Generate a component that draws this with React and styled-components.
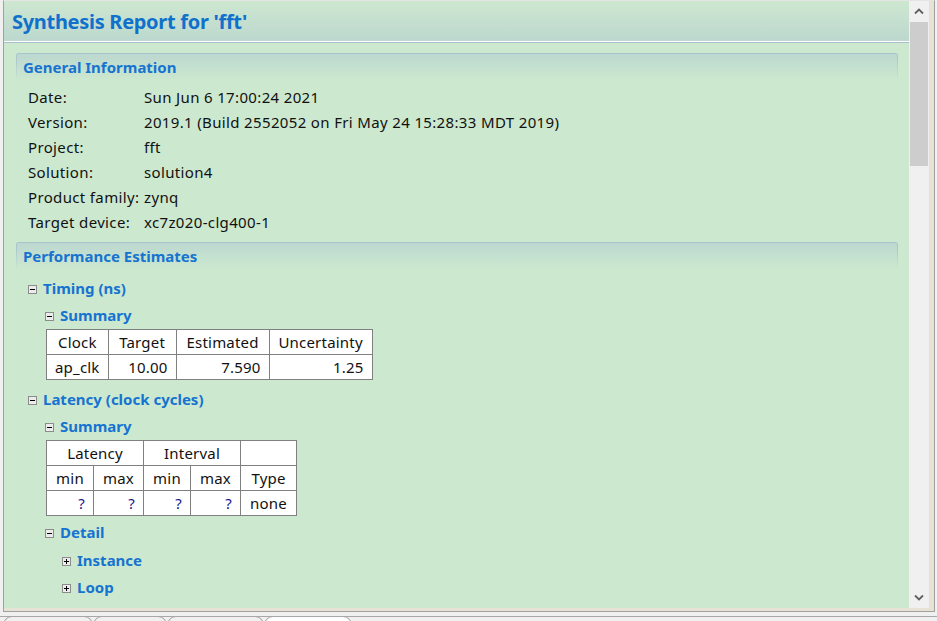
import React from 'react';
import styled, { createGlobalStyle } from 'styled-components';

const GlobalStyle = createGlobalStyle`
    html, body {
        margin: 0;
        padding: 0;
        background: #f0f0f0;
        overflow: hidden;
    }
    body {
        font-family: "Noto Sans", "Liberation Sans", sans-serif;
        width: 937px;
        height: 621px;
    }
`;

const generalInfo = [
    ['Date:', 'Sun Jun 6 17:00:24 2021'],
    ['Version:', '2019.1 (Build 2552052 on Fri May 24 15:28:33 MDT 2019)'],
    ['Project:', 'fft'],
    ['Solution:', 'solution4'],
    ['Product family:', 'zynq'],
    ['Target device:', 'xc7z020-clg400-1'],
];

const tabs = [
    { w: 88 },
    { w: 72 },
    { w: 95 },
    { w: 86, active: true },
];

// Little tree expander box (+ / -)
const Toggle = ({ open }) => (
    <ToggleBox>
        <svg width="7" height="7" viewBox="0 0 7 7">
            <rect x="1" y="3" width="5" height="1" fill="#000" />
            {!open && <rect x="3" y="1" width="1" height="5" fill="#000" />}
        </svg>
    </ToggleBox>
);

const Chevron = ({ down }) => (
    <svg width="10" height="7" viewBox="0 0 10 7">
        <path
            d={down ? 'M1 1.5 L5 5.5 L9 1.5' : 'M1 5.5 L5 1.5 L9 5.5'}
            fill="none"
            stroke="#606060"
            strokeWidth="1.8"
        />
    </svg>
);

const App = () => {
    return (
        <>
            <GlobalStyle />
            <Frame>
                <Inner>
                    <Content>
                        <TitleBar>
                            <Title>Synthesis Report for 'fft'</Title>
                        </TitleBar>
                        <Body>
                            <SectionHead>General Information</SectionHead>
                            <InfoGrid>
                                {generalInfo.map(([label, value]) => (
                                    <React.Fragment key={label}>
                                        <span>{label}</span>
                                        <span>{value}</span>
                                    </React.Fragment>
                                ))}
                            </InfoGrid>

                            <SectionHead>Performance Estimates</SectionHead>
                            <Head level={1}>
                                <Toggle open />Timing (ns)
                            </Head>
                            <Head level={2}>
                                <Toggle open />Summary
                            </Head>
                            <Grid>
                                <tbody>
                                    <tr>
                                        <Th w={61}>Clock</Th>
                                        <Th w={68}>Target</Th>
                                        <Th w={93}>Estimated</Th>
                                        <Th w={103}>Uncertainty</Th>
                                    </tr>
                                    <tr>
                                        <Td>ap_clk</Td>
                                        <Td align="right">10.00</Td>
                                        <Td align="right">7.590</Td>
                                        <Td align="right">1.25</Td>
                                    </tr>
                                </tbody>
                            </Grid>

                            <Head level={1}>
                                <Toggle open />Latency (clock cycles)
                            </Head>
                            <Head level={2}>
                                <Toggle open />Summary
                            </Head>
                            <Grid>
                                <tbody>
                                    <tr>
                                        <Th colSpan={2}>Latency</Th>
                                        <Th colSpan={2}>Interval</Th>
                                        <Th></Th>
                                    </tr>
                                    <tr>
                                        <Th w={47}>min</Th>
                                        <Th w={50}>max</Th>
                                        <Th w={47}>min</Th>
                                        <Th w={50}>max</Th>
                                        <Th w={56}>Type</Th>
                                    </tr>
                                    <tr>
                                        <Td align="right" unknown>?</Td>
                                        <Td align="right" unknown>?</Td>
                                        <Td align="right" unknown>?</Td>
                                        <Td align="right" unknown>?</Td>
                                        <Td align="center">none</Td>
                                    </tr>
                                </tbody>
                            </Grid>
                            <Head level={2}>
                                <Toggle open />Detail
                            </Head>
                            <Head level={3}>
                                <Toggle />Instance
                            </Head>
                            <Head level={3}>
                                <Toggle />Loop
                            </Head>
                        </Body>
                    </Content>
                    <Scrollbar>
                        <ScrollButton><Chevron /></ScrollButton>
                        <Track>
                            <Thumb />
                        </Track>
                        <ScrollButton><Chevron down /></ScrollButton>
                    </Scrollbar>
                </Inner>
            </Frame>
            <TabStrip>
                {tabs.map((t, i) => (
                    <Tab key={i} w={t.w} active={t.active} />
                ))}
            </TabStrip>
        </>
    );
};

const Frame = styled.div`
    margin-left: 3px;
    width: 928px;
    height: 609px;
    border-top: 1px solid #e4e4e4;
    border-left: 1px solid #a0a0a0;
    border-right: 1px solid #a0a0a0;
    border-bottom: 1px solid #a0a0a0;
    background: #e7e3d4;
    box-sizing: content-box;
    padding: 0 2px 1px 0;
`;

const Inner = styled.div`
    display: flex;
    height: 607px;
    width: 925px;
`;

const Content = styled.div`
    flex: 1;
    background: #cce8cf;
    overflow: hidden;
`;

const TitleBar = styled.div`
    height: 40px;
    display: flex;
    align-items: center;
    padding-left: 8px;
    background: linear-gradient(#cde7d0, #bcd8cf);
    border-bottom: 1px solid #ffffff;
    box-shadow: 0 1px 0 #a9bfcb;
`;

const Title = styled.h1`
    margin: 0;
    font-size: 20px;
    font-weight: 700;
    letter-spacing: -0.3px;
    color: #0f71cc;
`;

const Body = styled.div`
    padding: 11px 11px 0 12px;
`;

const SectionHead = styled.div`
    height: 26px;
    display: flex;
    align-items: center;
    padding-left: 7px;
    font-size: 15px;
    font-weight: 700;
    color: #1673d0;
    border-top: 1px solid #a9c2cd;
    border-radius: 3px 3px 0 0;
    background:
        linear-gradient(#a9c2cd, rgba(169, 194, 205, 0)) left / 1px 100% no-repeat,
        linear-gradient(#a9c2cd, rgba(169, 194, 205, 0)) right / 1px 100% no-repeat,
        linear-gradient(#bcd8d0, #cce8cf);
`;

const InfoGrid = styled.div`
    display: grid;
    grid-template-columns: 116px auto;
    grid-auto-rows: 25px;
    align-items: center;
    margin: 4px 0 8px;
    padding-left: 12px;
    font-size: 15px;
    letter-spacing: 0.35px;
    color: #111;
`;

const indent = { 1: 12, 2: 29, 3: 46 };

const Head = styled.div`
    height: ${(p) => (p.level === 2 ? 28 : 27)}px;
    display: flex;
    align-items: center;
    gap: 6px;
    padding-left: ${(p) => indent[p.level]}px;
    margin-top: ${(p) => (p.level === 1 ? 5 : 0)}px;
    font-size: 15px;
    font-weight: 700;
    color: #1673d0;
    &:first-of-type {
        margin-top: 4px;
    }
`;

const ToggleBox = styled.span`
    width: 7px;
    height: 7px;
    border: 1px solid #8c8c8c;
    background: #ececec;
    display: flex;
    margin-top: 3px;
`;

const Grid = styled.table`
    border-collapse: collapse;
    margin: 0 0 2px 30px;
    background: #fff;
    font-size: 15px;
    letter-spacing: 0.2px;
    color: #111;
`;

const Th = styled.td`
    border: 1px solid #808080;
    height: 24px;
    padding: 0;
    text-align: center;
    font-weight: 400;
    ${(p) => (p.w ? `width: ${p.w - 1}px;` : '')}
`;

const Td = styled.td`
    border: 1px solid #808080;
    height: 24px;
    padding: 0 8px;
    text-align: ${(p) => p.align || 'left'};
    color: ${(p) => (p.unknown ? '#16168a' : '#111')};
`;

const Scrollbar = styled.div`
    width: 20px;
    background: #f0f0f0;
    display: flex;
    flex-direction: column;
`;

const ScrollButton = styled.div`
    height: 21px;
    display: flex;
    align-items: center;
    justify-content: center;
`;

const Track = styled.div`
    flex: 1;
`;

const Thumb = styled.div`
    margin-left: 1px;
    width: 18px;
    height: 144px;
    background: #cdcdcd;
`;

const TabStrip = styled.div`
    margin-top: 4px;
    height: 7px;
    display: flex;
    padding-left: 3px;
    border-top: 1px solid #a8a8a8;
    overflow: hidden;
    position: relative;
`;

const Tab = styled.div`
    width: ${(p) => p.w}px;
    height: 14px;
    margin-top: -1px;
    border: 1px solid #a0a0a0;
    border-radius: 9px 9px 0 0;
    background: ${(p) => (p.active ? '#ffffff' : '#f0f0f0')};
    flex-shrink: 0;
`;

export default App;
